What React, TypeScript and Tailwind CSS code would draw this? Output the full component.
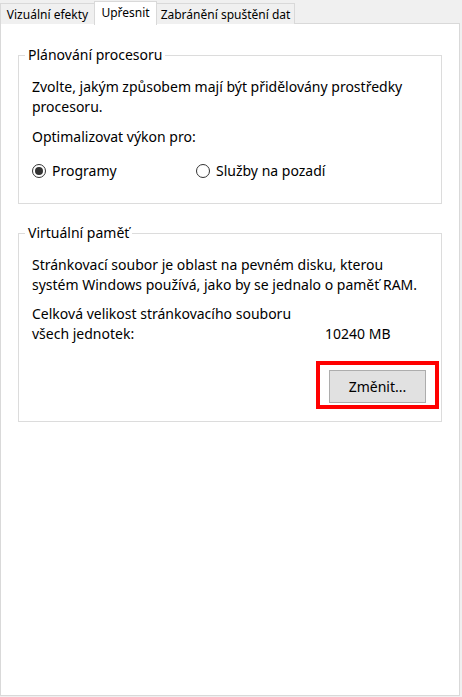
import React from "react";

function Tab({ label, active, className }: { label: string; active?: boolean; className: string }) {
  if (active) {
    return (
      <div
        className={`relative z-10 -mb-px flex h-[24px] items-start justify-center border border-b-0 border-[#d9d9d9] bg-white pt-[3px] ${className}`}
      >
        {label}
      </div>
    );
  }
  return (
    <div
      className={`flex h-[21px] items-start justify-center border border-b-0 border-[#d9d9d9] bg-[#f0f0f0] pt-[3px] ${className}`}
    >
      {label}
    </div>
  );
}

function Radio({ checked, label }: { checked?: boolean; label: string }) {
  return (
    <label className="flex items-center gap-[6px]">
      <span className="flex h-[14px] w-[14px] items-center justify-center rounded-full border border-[#333333] bg-white">
        {checked && <span className="h-[8px] w-[8px] rounded-full bg-[#333333]" />}
      </span>
      <span>{label}</span>
    </label>
  );
}

function Group({ title, className, children }: { title: string; className: string; children: React.ReactNode }) {
  return (
    <fieldset className={`mx-[17px] border border-[#dcdcdc] px-[13px] ${className}`}>
      <legend className="ml-[-7px] px-[3px] leading-[20px]">{title}</legend>
      {children}
    </fieldset>
  );
}

export default function App() {
  return (
    <div
      className="h-[697px] w-[462px] bg-[#f0f0f0] text-[14px] leading-[20px] text-black"
      style={{ fontFamily: '"Noto Sans", "Liberation Sans", sans-serif' }}
    >
      <div className="flex h-[24px] items-end text-[12px] leading-[16px]">
        <Tab label="Vizuální efekty" className="w-[95px]" />
        <Tab label="Upřesnit" active className="-ml-px w-[63px]" />
        <Tab label="Zabránění spuštění dat" className="-ml-px w-[139px]" />
      </div>
      <div className="-mt-px h-[673px] w-[460px] border border-[#d9d9d9] bg-white pt-[21px]">
        <Group title="Plánování procesoru" className="pb-[22px]">
          <p className="mt-[12px]">
            Zvolte, jakým způsobem mají být přidělovány prostředky
            <br />
            procesoru.
          </p>
          <p className="mt-[10px]">Optimalizovat výkon pro:</p>
          <div className="mt-[14px] flex">
            <div className="w-[164px]">
              <Radio checked label="Programy" />
            </div>
            <Radio label="Služby na pozadí" />
          </div>
        </Group>
        <Group title="Virtuální paměť" className="mt-[19px] pb-[12px]">
          <p className="mt-[12px]">
            Stránkovací soubor je oblast na pevném disku, kterou
            <br />
            systém Windows používá, jako by se jednalo o paměť RAM.
          </p>
          <p className="mt-[9px]">Celková velikost stránkovacího souboru</p>
          <div className="flex">
            <span className="w-[293px]">všech jednotek:</span>
            <span>10240 MB</span>
          </div>
          <div className="mt-[17px] flex justify-end">
            <div className="mr-[-11px] border-4 border-[#ff0000] px-[9px] pt-[5px] pb-[2px]">
              <button className="h-[33px] w-[97px] border border-[#adadad] bg-[#e1e1e1]">
                Změnit...
              </button>
            </div>
          </div>
        </Group>
      </div>
    </div>
  );
}
